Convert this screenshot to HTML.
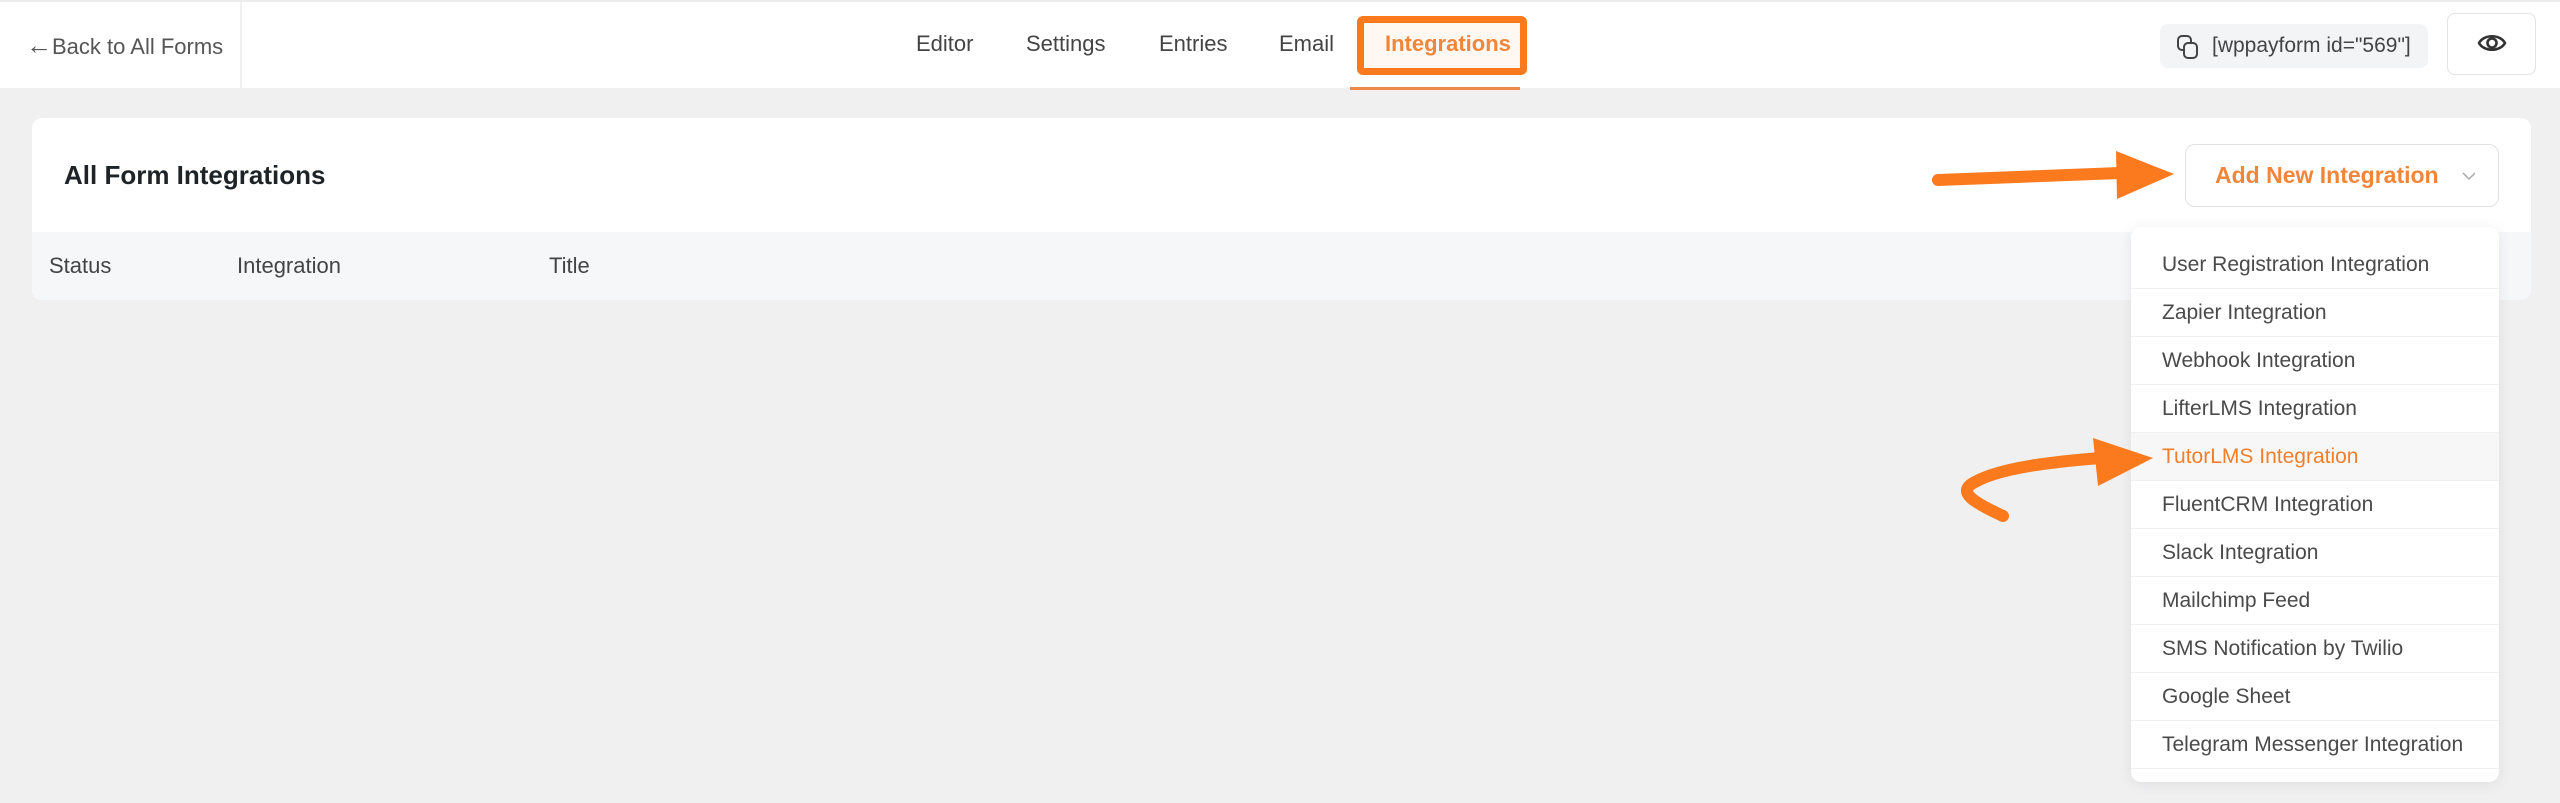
<!DOCTYPE html>
<html><head><meta charset="utf-8"><style>
*{margin:0;padding:0;box-sizing:border-box}
body{width:2560px;height:803px;background:#f0f0f1;font-family:"Liberation Sans",sans-serif;position:relative;overflow:hidden;color:#3c434a}
.hdr{position:absolute;left:0;top:0;width:2560px;height:88px;background:#fff;border-top:2px solid #ececec}
.back{position:absolute;left:0;top:0;width:242px;height:86px;border-right:2px solid #f0f0f0;font-size:22px;color:#555;line-height:86px;padding-left:26px}
.tab{position:absolute;top:0;line-height:84px;font-size:22px;color:#444}
.box{position:absolute;left:1357px;top:14px;width:170px;height:59px;border:7px solid #fb7a1e;border-radius:6px;background:#fff8f2}
.ul{position:absolute;left:1350px;top:85px;width:170px;height:3px;background:#f0894a}
.sc{position:absolute;left:2160px;top:22px;width:268px;height:44px;background:#f3f4f6;border-radius:8px;font-size:21px;color:#444;line-height:44px;padding-left:52px}
.eye{position:absolute;left:2447px;top:11px;width:89px;height:62px;border:1.5px solid #e3e3e3;border-radius:8px;background:#fff}
.card{position:absolute;left:32px;top:118px;width:2499px;height:182px;background:#fff;border-radius:10px;overflow:hidden}
.th{position:absolute;left:0;top:114px;width:100%;height:68px;background:#f6f7f9}
.th span{position:absolute;top:0;line-height:68px;font-size:22px;color:#444}
.title{position:absolute;left:32px;top:0;line-height:114px;font-size:26px;font-weight:bold;color:#1d2327}
.btn{position:absolute;left:2185px;top:144px;width:314px;height:63px;background:#fff;border:1.5px solid #e2e2e2;border-radius:10px;font-size:23px;color:#f0863a;line-height:60px;padding-left:29px;font-weight:bold}
.dd{position:absolute;left:2131px;top:227px;width:368px;height:555px;background:#fff;border-radius:10px;box-shadow:0 2px 14px rgba(0,0,0,.08)}
.it{height:48px;line-height:48px;font-size:21px;color:#4a4a4a;padding-left:31px;border-bottom:1px solid #f0f0f0}
.it.h{background:#f7f7f7;color:#f07f2c}
</style></head><body>
<div class="hdr">
<div class="back"><span style="font-size:26px">←</span>Back to All Forms</div>
<div class="tab" style="left:916px">Editor</div>
<div class="tab" style="left:1026px">Settings</div>
<div class="tab" style="left:1159px">Entries</div>
<div class="tab" style="left:1279px">Email</div>
<div class="box"></div>
<div class="tab" style="left:1385px;color:#f0863a;font-weight:bold">Integrations</div>
<div class="ul"></div>
<div class="sc">[wppayform id="569"]<svg style="position:absolute;left:16px;top:10px" width="24" height="26" viewBox="0 0 24 26" fill="none" stroke="#444" stroke-width="2"><rect x="2" y="2" width="13" height="14" rx="4"/><rect x="8" y="9" width="13" height="15" rx="4" fill="#f3f4f6"/></svg></div>
<div class="eye"><svg style="position:absolute;left:29px;top:17px" width="30" height="24" viewBox="0 0 30 24" fill="none" stroke="#333" stroke-width="2.6"><path d="M2 12C7 3 23 3 28 12C23 21 7 21 2 12Z"/><circle cx="15" cy="12" r="4.5"/></svg></div>
</div>
<div class="card">
<div class="title">All Form Integrations</div>
<div class="th"><span style="left:17px">Status</span><span style="left:205px">Integration</span><span style="left:517px">Title</span></div>
</div>
<div class="btn">Add New Integration<svg style="position:absolute;left:276px;top:27px" width="14" height="9" viewBox="0 0 14 9" fill="none" stroke="#aaa" stroke-width="1.5"><path d="M1 1L7 7L13 1"/></svg></div>
<div class="dd" style="padding-top:14px">
<div class="it">User Registration Integration</div>
<div class="it">Zapier Integration</div>
<div class="it">Webhook Integration</div>
<div class="it">LifterLMS Integration</div>
<div class="it h">TutorLMS Integration</div>
<div class="it">FluentCRM Integration</div>
<div class="it">Slack Integration</div>
<div class="it">Mailchimp Feed</div>
<div class="it">SMS Notification by Twilio</div>
<div class="it">Google Sheet</div>
<div class="it">Telegram Messenger Integration</div>
</div>
<svg style="position:absolute;left:0;top:0" width="2560" height="803">
<path d="M1938 180L2120 173" stroke="#fb7a1e" stroke-width="12" stroke-linecap="round" fill="none"/>
<polygon points="2116,151 2117,199 2174,174" fill="#fb7a1e"/>
<path d="M2003 516C1975 503 1955 492 1975 482C2000 468 2050 462 2100 458" stroke="#fb7a1e" stroke-width="12" stroke-linecap="round" fill="none"/>
<polygon points="2093,438 2098,486 2153,458" fill="#fb7a1e"/>
</svg>
</body></html>
